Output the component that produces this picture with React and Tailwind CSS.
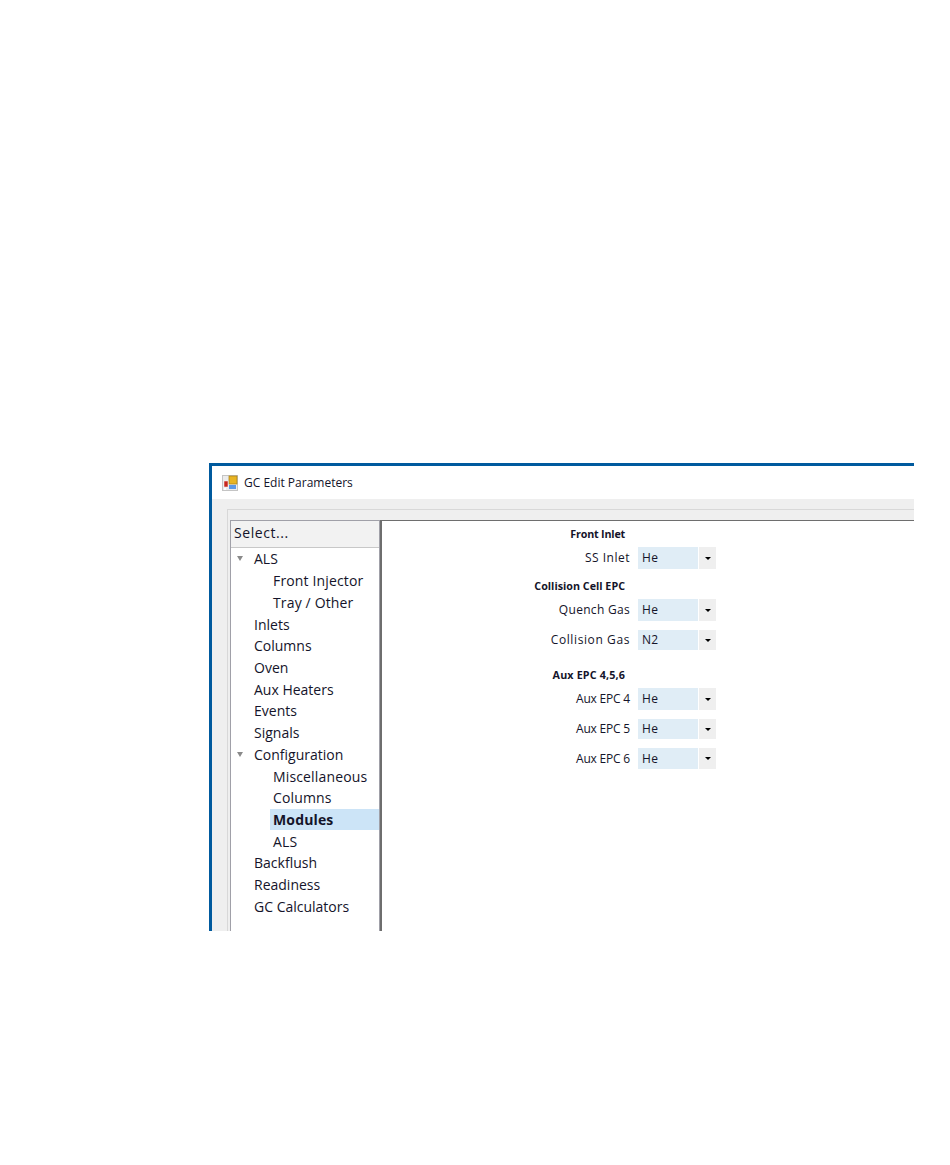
const tree = [
  { label: "ALS", open: true },
  { label: "Front Injector", child: true },
  { label: "Tray / Other", child: true },
  { label: "Inlets" },
  { label: "Columns" },
  { label: "Oven" },
  { label: "Aux Heaters" },
  { label: "Events" },
  { label: "Signals" },
  { label: "Configuration", open: true },
  { label: "Miscellaneous", child: true },
  { label: "Columns", child: true },
  { label: "Modules", child: true, selected: true },
  { label: "ALS", child: true },
  { label: "Backflush" },
  { label: "Readiness" },
  { label: "GC Calculators" },
];

const AppIcon = () => (
  <svg width="16" height="16" viewBox="0 0 16 16" className="shrink-0">
    <rect width="16" height="16" fill="#c4c4c4" />
    <rect x="1" y="1" width="14" height="14" fill="#ececec" />
    <rect x="7" y="1" width="8" height="8" fill="#e8b422" stroke="#a8801a" strokeWidth="0.75" />
    <rect x="2" y="6" width="4" height="6" fill="#c8281e" stroke="#f8f8f8" strokeWidth="0.5" />
    <rect x="7" y="10" width="7" height="4" fill="#5b97e6" />
    <rect x="2" y="13" width="2" height="2" fill="#ffffff" />
  </svg>
);

const TreeRow = ({ label, child, open, selected }) => (
  <div className={`h-[21.72px] flex items-center ${child ? "ml-[39px] pl-[3px] tracking-[0.15px]" : "pl-[23px]"} ${selected ? "bg-[#cce4f7] font-bold" : ""}`}>
    {open && <span className="absolute left-[6px] w-0 h-0 border-x-[3.5px] border-x-transparent border-t-[5px] border-t-[#8a8a8a]" />}
    {label}
  </div>
);

const Field = ({ label, value, className }) => (
  <div className={`flex items-center ml-[136px] ${className}`}>
    <div className="w-[120px] pr-[8px] text-right">{label}</div>
    <div className="w-[60px] h-full bg-[#e0edf6] pl-[4px] flex items-center tracking-[0.3px]">{value}</div>
    <div className="ml-px w-[17px] h-full bg-[#efefef] flex items-center justify-center">
      <span className="w-0 h-0 border-x-[3px] border-x-transparent border-t-[3px] border-t-black" />
    </div>
  </div>
);

const Heading = ({ children, className }) => (
  <div className={`w-[243px] text-right font-bold text-[10.75px] leading-[14px] ${className}`}>{children}</div>
);

export default function App() {
  return (
    <div className="w-[950px] h-[1165px] bg-white pt-[463px] pl-[209px] font-['Open_Sans',sans-serif] text-[#14142a]">
      <div className="w-[705px] h-[468px] border-t-[3px] border-l-[3px] border-[#005a9e] flex flex-col overflow-hidden">
        <div className="h-[33px] shrink-0 flex items-center gap-[6px] pl-[10px] text-[12px]">
          <AppIcon />
          <span>GC Edit Parameters</span>
        </div>
        <div className="flex-1 bg-[#efefef] pl-[15px] pt-[10px] flex flex-col min-h-0">
          <div className="flex-1 border-t border-l border-[#d8d8d8] pl-[2px] pt-[10px] flex min-h-0">
            <div className="w-[150px] shrink-0 border-t border-x border-[#a0a0a8] bg-white text-[14px] relative">
              <div className="h-[27px] bg-[#f2f2f2] border-b border-[#c8c8c8] pl-[3px] pb-[3px] flex items-center tracking-[0.55px]">Select...</div>
              <div>
                {tree.map((row, i) => <TreeRow key={i} {...row} />)}
              </div>
            </div>
            <div className="flex-1 bg-white border-t border-l-2 border-[#6e6e6e] text-[12px]">
              <Heading className="mt-[6px] tracking-[-0.2px]">Front Inlet</Heading>
              <Field label={<span className="tracking-[0.5px]">SS Inlet</span>} value="He" className="h-[22px] mt-[6px]" />
              <Heading className="mt-[10px]">Collision Cell EPC</Heading>
              <Field label={<span className="tracking-[0.3px]">Quench Gas</span>} value="He" className="h-[22px] mt-[6px]" />
              <Field label={<span className="tracking-[0.6px]">Collision Gas</span>} value="N2" className="h-[20px] mt-[9px]" />
              <Heading className="mt-[18px] tracking-[0.15px]">Aux EPC 4,5,6</Heading>
              <Field label={<span className="tracking-[-0.2px]">Aux EPC 4</span>} value="He" className="h-[22px] mt-[6px]" />
              <Field label={<span className="tracking-[-0.2px]">Aux EPC 5</span>} value="He" className="h-[20px] mt-[9px]" />
              <Field label={<span className="tracking-[-0.2px]">Aux EPC 6</span>} value="He" className="h-[21px] mt-[9px]" />
            </div>
          </div>
        </div>
      </div>
    </div>
  );
}
